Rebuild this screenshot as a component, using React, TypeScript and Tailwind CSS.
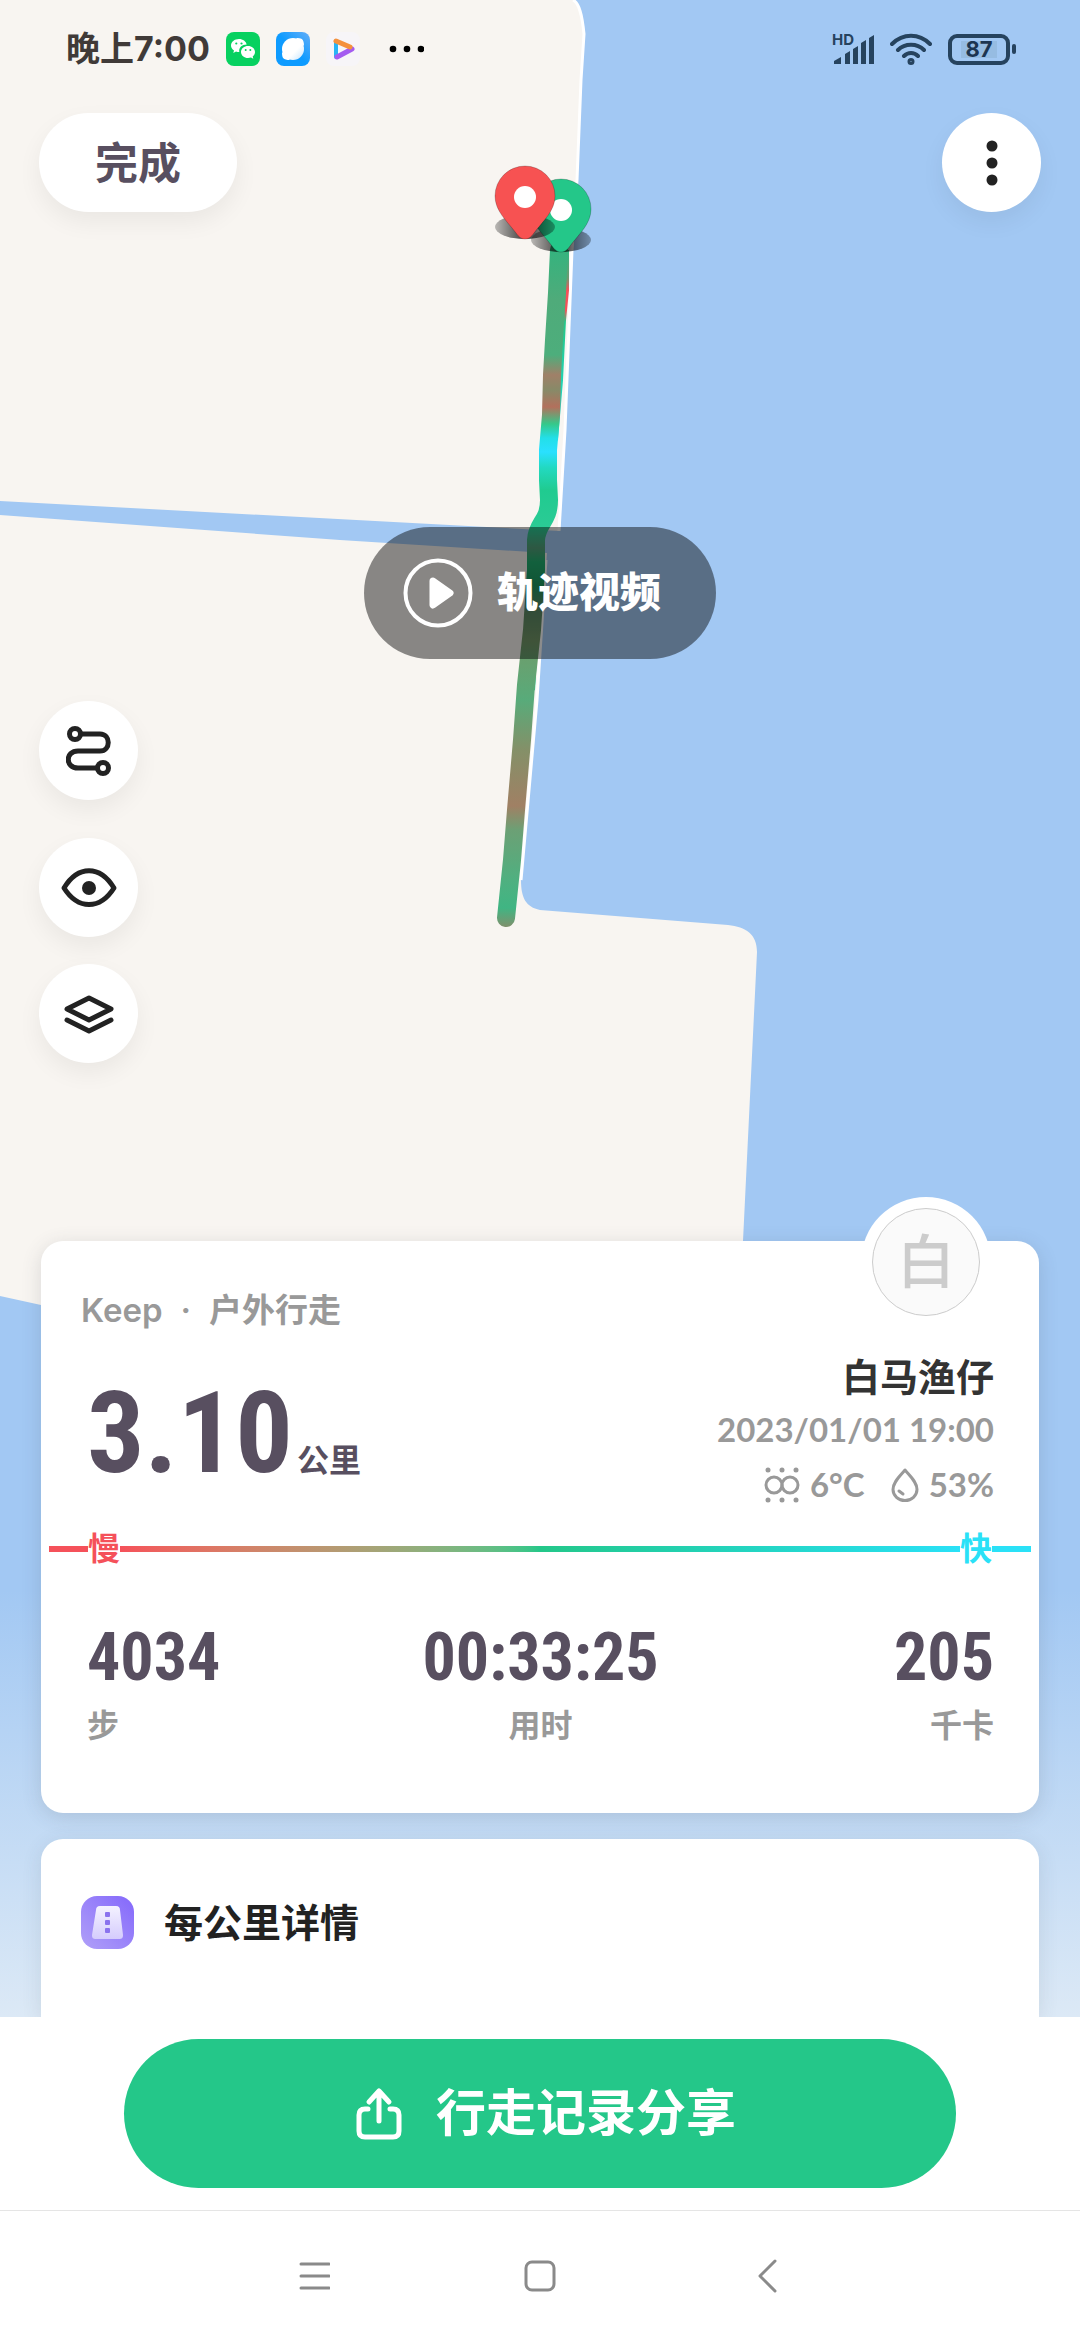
import type { ReactNode } from 'react'

interface Stat {
  value: string
  unit: string
  align: string
}

const STATS: Stat[] = [
  { value: '4034', unit: '步', align: 'text-left' },
  { value: '00:33:25', unit: '用时', align: 'text-center' },
  { value: '205', unit: '千卡', align: 'text-right' },
]

// Pace colours along the route, y in map units
const PACE_STOPS: [number, string][] = [
  [250, '#35b37e'], [300, '#4fab7a'], [355, '#4dae7c'], [375, '#a08068'],
  [390, '#878a68'], [407, '#b3705c'], [424, '#35c98a'], [438, '#23dfe8'],
  [452, '#2ae0ff'], [468, '#22d9c0'], [490, '#20cb90'], [528, '#2bcb95'],
  [548, '#54a07a'], [562, '#22b070'], [585, '#1f9a62'], [610, '#5a8a66'],
  [640, '#749768'], [655, '#6b9f6e'], [700, '#58ab7a'], [750, '#849068'],
  [806, '#a08064'], [830, '#6ca075'], [880, '#4fb080'], [908, '#40b583'],
  [927, '#80906c'],
]

function Pin({ x, y, color }: { x: number; y: number; color: string }) {
  return (
    <g transform={`translate(${x} ${y})`}>
      <ellipse cx="0" cy="-12" rx="30" ry="12" fill="url(#pinShadow)" />
      <path
        d="M0 0C-4 0-6-2-9-6C-18-18-30-28-30-43A30 30 0 0 1 30-43C30-28 18-18 9-6C6-2 4 0 0 0Z"
        fill={color} stroke="#000" strokeOpacity="0.2"
      />
      <circle cx="0" cy="-42" r="11" fill="#fff" />
    </g>
  )
}

function RouteMap() {
  return (
    <svg
      className="absolute inset-0 h-full w-full"
      viewBox="0 0 1080 2017"
      preserveAspectRatio="xMidYMin slice"
      aria-hidden="true"
    >
      <defs>
        <linearGradient id="pace" gradientUnits="userSpaceOnUse" x1="0" y1="250" x2="0" y2="927">
          {PACE_STOPS.map(([y, color]) => (
            <stop key={y} offset={(y - 250) / 677} stopColor={color} />
          ))}
        </linearGradient>
        <linearGradient id="paceBack" gradientUnits="userSpaceOnUse" x1="0" y1="250" x2="0" y2="450">
          <stop offset="0" stopColor="#2db983" />
          <stop offset="0.14" stopColor="#6c9a70" />
          <stop offset="0.2" stopColor="#f5515a" />
          <stop offset="0.3" stopColor="#f5515a" />
          <stop offset="0.36" stopColor="#24c789" />
          <stop offset="1" stopColor="#22dfe0" />
        </linearGradient>
        <linearGradient id="water" gradientUnits="userSpaceOnUse" x1="0" y1="1590" x2="0" y2="2017">
          <stop offset="0" stopColor="#a2c8f3" />
          <stop offset="1" stopColor="#dce9f6" />
        </linearGradient>
        <linearGradient id="pinShadow">
          <stop offset="0" stopColor="#000" stopOpacity="0.25" />
          <stop offset="0.5" stopColor="#000" stopOpacity="0.75" />
          <stop offset="1" stopColor="#000" stopOpacity="0.3" />
        </linearGradient>
      </defs>

      <rect width="1080" height="2017" fill="url(#water)" />
      <path
        d="M0 0H573C579 3 582 14 584 34L581 80L577 180L572 250L565 430L560 531L0 501Z"
        fill="#f8f5f1"
      />
      <path
        d="M0 515L340 540L547 553L537 700L521 880C521 898 526 907 540 910L728 925C746 927 757 934 757 952L743 1241V1500L41 1305L0 1296Z"
        fill="#f8f5f1"
      />
      <path
        d="M573 0C579 3 582 14 584 34L581 80L577 180L572 250L565 430L559 531M546 560L537 700L521 880"
        fill="none" stroke="#fff" strokeWidth="3"
      />

      <path d="M562 250L562 290L559 320L556 380L551 440" fill="none" stroke="url(#paceBack)" strokeWidth="14" />
      <path d="M535 640L532 690" fill="none" stroke="#1fcf96" strokeWidth="6" />
      <path
        d="M559 250L557 293L554 340L552 375L551 415L548 450L548 480L549 500C549 522 537 522 536 540L536 570L532 630L526 685L522 740L516 810L512 860L506 918"
        fill="none" stroke="url(#pace)" strokeWidth="18" strokeLinecap="round" strokeLinejoin="round"
      />

      <Pin x={561} y={252} color="#24c789" />
      <Pin x={525} y={239} color="#f75252" />
    </svg>
  )
}

function StatusBar() {
  return (
    <div className="flex h-[98px] items-center justify-between pr-[64px] pl-[66px]">
      <div className="flex items-center gap-4">
        <span className="text-[34px] leading-none font-bold text-[#403a38]">晚上7:00</span>
        <svg width="34" height="34" viewBox="0 0 34 34" aria-hidden="true">
          <rect width="34" height="34" rx="8" fill="#07d160" />
          <path d="M13 7C8.500 7 5 9.900 5 13.500C5 15.600 6.200 17.300 8 18.500L7.300 21L10 19.500C11 19.900 12 20 13.300 20C12.500 15.700 16 12.600 20.700 12.600C20 9.300 17 7 13 7Z" fill="#fff" />
          <path d="M22 14C18.200 14 15 16.600 15 20C15 23.400 18.200 26 22 26C23 26 24 25.800 25 25.500L27.300 26.700L26.700 24.500C28.200 23.400 29 21.800 29 20C29 16.600 25.800 14 22 14Z" fill="#fff" />
          <g fill="#07d160">
            <circle cx="10.300" cy="11.500" r="1.100" /><circle cx="15.500" cy="11.500" r="1.100" />
            <circle cx="19.700" cy="18" r="1" /><circle cx="24.300" cy="18" r="1" />
          </g>
        </svg>
        <svg width="34" height="34" viewBox="0 0 34 34" aria-hidden="true">
          <defs>
            <linearGradient id="browser" x1="1" y1="0" x2="0" y2="1">
              <stop offset="0" stopColor="#65aef8" /><stop offset="0.5" stopColor="#0e9bff" />
            </linearGradient>
            <linearGradient id="globe" x1="0" y1="0" x2="1" y2="1">
              <stop offset="0.600" stopColor="#fff" /><stop offset="1" stopColor="#c5e4fc" />
            </linearGradient>
          </defs>
          <rect width="34" height="34" rx="8" fill="url(#browser)" />
          <circle cx="17" cy="17" r="11" fill="url(#globe)" />
          <path d="M20 6C25 6 28 6 28 14ZM6 20C6 26 7 28 14 28Z" fill="#fff" />
        </svg>
        <svg width="34" height="34" viewBox="0 0 34 34" aria-hidden="true">
          <rect width="34" height="34" rx="8" fill="#f7f5f8" />
          <path d="M10 9V25" stroke="#28b4f5" strokeWidth="4" strokeLinecap="round" />
          <path d="M11 25L26 17" stroke="#a45bf0" strokeWidth="5" strokeLinecap="round" />
          <path d="M10 9L24 15" stroke="#f5913c" strokeWidth="5" strokeLinecap="round" />
        </svg>
        <svg className="ml-3" width="36" height="8" viewBox="0 0 36 8" aria-hidden="true">
          <circle cx="5" cy="4" r="3.300" /><circle cx="19" cy="4" r="3.300" /><circle cx="33" cy="4" r="3.300" />
        </svg>
      </div>

      <div className="flex items-center gap-4 text-[#26435e]">
        <svg width="42" height="48" viewBox="0 -8 42 48" fill="currentColor" aria-hidden="true">
          <text x="0" y="12" fontSize="15" fontWeight="700">HD</text>
          <path d="M2 31V28L9 24V31ZM13 31V21L18 18V31ZM21 31V16L26 13V31ZM29 31V10L34 7V31ZM37 31V5L42 2V31Z" />
        </svg>
        <svg width="42" height="32" viewBox="0 0 42 32" fill="none" stroke="currentColor" strokeWidth="4" strokeLinecap="round" aria-hidden="true">
          <path d="M2 11C13 0 29 0 40 11M8 17C15 10 27 10 34 17M14 23C18 19 24 19 28 23" />
          <circle cx="21" cy="28.500" r="1.500" />
        </svg>
        <div className="flex items-center gap-[2px]">
          <span className="flex h-[31px] w-[62px] items-center justify-center rounded-[9px] border-4 border-current">
            <span className="bg-[#96bce2] px-1 text-[22px] leading-[17px] font-bold text-[#1d3550]">87</span>
          </span>
          <span className="h-[10px] w-1 rounded-full bg-current" />
        </div>
      </div>
    </div>
  )
}

function RoundButton({ label, children }: { label: string; children: ReactNode }) {
  return (
    <button
      type="button"
      aria-label={label}
      className="flex h-[99px] w-[99px] items-center justify-center rounded-full bg-white text-[#222] shadow-[0_10px_24px_rgba(0,0,0,0.06)]"
    >
      {children}
    </button>
  )
}

function SummaryCard() {
  return (
    <section className="relative rounded-[22px] bg-white pt-[45px] pb-[63px] shadow-[0_4px_20px_rgba(60,70,80,0.16)]">
      {/* Avatar sits over the top edge */}
      <div className="absolute -top-11 right-12 flex h-[130px] w-[130px] items-center justify-center rounded-full bg-white">
        <span className="flex h-[108px] w-[108px] items-center justify-center rounded-full border border-[#ccc] bg-[#fafafa] text-[58px] leading-none font-medium text-[#ccc]">
          白
        </span>
      </div>

      <p className="px-10 text-[33px] leading-[48px] font-semibold text-[#999]">
        <span>Keep</span>
        <span className="mx-[18px]">·</span>
        <span>户外行走</span>
      </p>

      <div className="mt-[15px] flex justify-between pr-[45px] pl-[46px]">
        <div className="flex items-baseline text-[#584f60]">
          <span className="font-['Roboto_Condensed','Liberation_Sans_Narrow',sans-serif] text-[114px] leading-[168px] font-bold">3.10</span>
          <span className="ml-1 text-[32px] font-bold">公里</span>
        </div>
        <div className="text-right font-['Lato','Noto_Sans_CJK_SC',sans-serif] text-[33px] font-bold text-[#999]">
          <h1 className="text-[38px] leading-[54px] text-[#333]">白马渔仔</h1>
          <p className="leading-[52px]">2023/01/01 19:00</p>
          <div className="flex h-[60px] items-center justify-end">
            <svg width="36" height="36" viewBox="0 0 36 36" fill="none" stroke="currentColor" strokeWidth="3" aria-hidden="true">
              <circle cx="10" cy="18" r="8" /><circle cx="26" cy="18" r="8" />
              <g fill="currentColor" stroke="none">
                <circle cx="4" cy="3" r="2.500" /><circle cx="18" cy="3" r="2.500" /><circle cx="32" cy="3" r="2.500" />
                <circle cx="4" cy="33" r="2.500" /><circle cx="18" cy="33" r="2.500" /><circle cx="32" cy="33" r="2.500" />
              </g>
            </svg>
            <span className="ml-[10px]">6°C</span>
            <svg className="ml-[26px]" width="28" height="34" viewBox="0 0 28 34" fill="none" stroke="currentColor" strokeWidth="3" aria-hidden="true">
              <path d="M14 2C19 8 26 14 26 21.500A12 11 0 0 1 2 21.500C2 14 9 8 14 2Z" strokeLinejoin="round" />
              <path d="M8 23L12 26" strokeLinecap="round" />
            </svg>
            <span className="ml-[10px]">53%</span>
          </div>
        </div>
      </div>

      {/* Pace scale */}
      <div className="mx-2 mt-2 flex items-center text-[32px] leading-[48px] font-bold">
        <span className="h-[6px] w-[39px] bg-[#f5515a]" />
        <span className="text-[#f5515a]">慢</span>
        <span className="h-[6px] flex-1 bg-linear-to-r from-[#f5515a] via-[#24c789] to-[#2ae1f7]" />
        <span className="text-[#2ae1f7]">快</span>
        <span className="h-[6px] w-[39px] bg-[#2ae1f7]" />
      </div>

      <dl className="mt-[49px] grid grid-cols-3 pr-[45px] pl-[46px]">
        {STATS.map(stat => (
          <div key={stat.unit} className={stat.align}>
            <dd className="font-['Roboto_Condensed','Liberation_Sans_Narrow',sans-serif] text-[66px] leading-[72px] font-bold text-[#584f60]">{stat.value}</dd>
            <dt className="mt-2 text-[32px] leading-[48px] font-semibold text-[#999]">{stat.unit}</dt>
          </div>
        ))}
      </dl>
    </section>
  )
}

export default function App() {
  return (
    <div className="flex min-h-screen flex-col bg-white font-['Inter','Noto_Sans_CJK_SC',sans-serif]">
      <main className="relative flex flex-1 flex-col overflow-hidden">
        <RouteMap />

        <div className="relative flex flex-1 flex-col">
          <StatusBar />

          <header className="mt-[15px] flex justify-between px-[39px]">
            <button type="button" className="h-[99px] w-[198px] rounded-full bg-white pt-[2px] text-[43px] font-bold text-[#584f60] shadow-[0_10px_24px_rgba(0,0,0,0.06)]">
              完成
            </button>
            <RoundButton label="更多">
              <svg width="12" height="46" viewBox="0 0 12 46" fill="currentColor" aria-hidden="true">
                <circle cx="6" cy="6" r="5.500" /><circle cx="6" cy="23" r="5.500" /><circle cx="6" cy="40" r="5.500" />
              </svg>
            </RoundButton>
          </header>

          <button type="button" className="mt-[315px] flex h-[132px] w-[352px] items-center gap-6 self-center rounded-full bg-black/45 pl-[39px] text-[41px] font-extrabold text-white">
            <svg width="70" height="70" viewBox="0 0 70 70" aria-hidden="true">
              <circle cx="35" cy="35" r="32.500" fill="none" stroke="currentColor" strokeWidth="4" />
              <path d="M30 23L47 35L30 47Z" fill="currentColor" stroke="currentColor" strokeWidth="7" strokeLinejoin="round" />
            </svg>
            轨迹视频
          </button>

          <div className="mt-[42px] flex flex-col px-[39px]">
            <RoundButton label="路线">
              <svg width="46" height="52" viewBox="0 0 46 52" fill="none" stroke="currentColor" strokeWidth="5" aria-hidden="true">
                <circle cx="9" cy="9" r="5.500" /><circle cx="37" cy="43" r="5.500" />
                <path d="M15 9H34C45 9 45 26 34 26H12C-1 26-1 43 12 43H31" />
              </svg>
            </RoundButton>
            <div className="mt-[38px] flex flex-col gap-[27px]">
              <RoundButton label="显示">
                <svg width="56" height="42" viewBox="0 0 56 42" fill="none" stroke="currentColor" strokeWidth="5" strokeLinejoin="round" aria-hidden="true">
                  <path d="M3 21C17-2 39-2 53 21C39 43 17 43 3 21Z" />
                  <circle cx="28" cy="21" r="7" fill="currentColor" stroke="none" />
                </svg>
              </RoundButton>
              <RoundButton label="图层">
                <svg width="52" height="40" viewBox="0 0 52 40" fill="none" stroke="currentColor" strokeWidth="5" strokeLinecap="round" strokeLinejoin="round" aria-hidden="true">
                  <path d="M26 4L48 15L26 26L4 15ZM4 26L26 37L48 26" />
                </svg>
              </RoundButton>
            </div>
          </div>

          <div className="mt-[178px] flex flex-1 flex-col gap-[26px] px-[41px]">
            <SummaryCard />
            <section className="flex flex-1 items-start gap-[30px] rounded-t-[22px] bg-white px-10 pt-[57px] shadow-[0_4px_20px_rgba(60,70,80,0.12)]">
              <svg width="53" height="53" viewBox="0 0 53 53" aria-hidden="true">
                <defs>
                  <linearGradient id="roadTile" x1="1" y1="0" x2="0" y2="1">
                    <stop offset="0" stopColor="#8468fb" /><stop offset="1" stopColor="#b0a0f8" />
                  </linearGradient>
                  <linearGradient id="road" x1="0" y1="0" x2="0" y2="1">
                    <stop offset="0" stopColor="#f4f2ff" /><stop offset="1" stopColor="#d5ccfd" />
                  </linearGradient>
                </defs>
                <rect width="53" height="53" rx="16" fill="url(#roadTile)" />
                <path d="M19 10H35C38 10 39 12 39 14L42 39C42 42 41 43 38 43H15C12 43 11 42 11 39L15 14C15 12 16 10 19 10Z" fill="url(#road)" />
                <g fill="#8a72ee">
                  <rect x="24" y="16" width="5" height="5" rx="1" />
                  <rect x="24" y="24" width="5" height="5" rx="1" />
                  <rect x="24" y="32" width="5" height="5" rx="1" />
                </g>
              </svg>
              <h2 className="text-[39px] leading-[53px] font-bold text-[#222]">每公里详情</h2>
            </section>
          </div>
        </div>
      </main>

      <footer className="bg-white">
        <div className="px-[124px] py-[22px]">
          <button type="button" className="flex h-[149px] w-full items-center justify-center gap-[34px] rounded-full bg-[#24c789] pl-3 text-[50px] font-bold text-white">
            <svg width="46" height="54" viewBox="0 0 46 54" fill="none" stroke="currentColor" strokeWidth="5" strokeLinecap="round" strokeLinejoin="round" aria-hidden="true">
              <path d="M23 34V4M13 15L23 4L33 15" />
              <path d="M12 22H9C5 22 3 24 3 28V44C3 48 5 50 9 50H37C41 50 43 48 43 44V28C43 24 41 22 37 22H34" />
            </svg>
            行走记录分享
          </button>
        </div>
        <nav className="flex h-[130px] items-center justify-center gap-[194px] border-t border-[#e5e5e5] text-[#8a8a8a]">
          <button type="button" aria-label="最近任务">
            <svg width="32" height="34" viewBox="0 0 32 34" fill="none" stroke="currentColor" strokeWidth="3" strokeLinecap="round">
              <path d="M3 5H31M3 17H31M3 29H31" />
            </svg>
          </button>
          <button type="button" aria-label="主屏幕">
            <svg width="32" height="34" viewBox="0 0 32 34" fill="none" stroke="currentColor" strokeWidth="3">
              <rect x="2" y="3" width="28" height="28" rx="6" />
            </svg>
          </button>
          <button type="button" aria-label="返回">
            <svg width="32" height="34" viewBox="0 0 32 34" fill="none" stroke="currentColor" strokeWidth="3" strokeLinecap="round" strokeLinejoin="round">
              <path d="M25 2L10 17L25 32" />
            </svg>
          </button>
        </nav>
      </footer>
    </div>
  )
}
